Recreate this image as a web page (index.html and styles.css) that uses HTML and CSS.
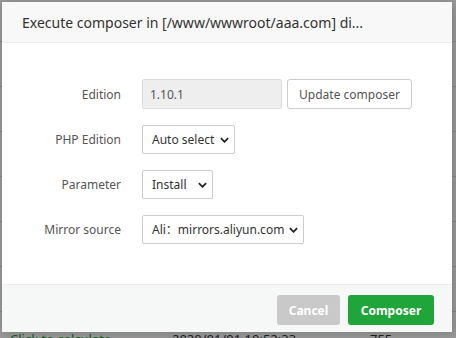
FILE: index.html
```html
<!DOCTYPE html>
<html>
<head>
<meta charset="utf-8">
<link rel="stylesheet" href="styles.css">
</head>
<body>
<div class="page">
  <div class="row"></div>
  <div class="row"></div>
  <div class="row"></div>
  <div class="row"></div>
  <div class="row"></div>
  <div class="row"></div>
  <div class="row"></div>
  <div class="row last"><span class="c1">Click to calculate</span><span class="c2">2020/01/01 10:52:33</span><span class="c3">755</span></div>
</div>
<div class="shade"></div>
<div class="dialog">
  <div class="dlg-title">Execute composer in [/www/wwwroot/aaa.com] di...</div>
  <div class="dlg-body">
    <div class="line">
      <label class="lbl">Edition</label>
      <div class="ctrls">
        <input class="inp" type="text" value="1.10.1" readonly>
        <button class="btn-update">Update composer</button>
      </div>
    </div>
    <div class="line">
      <label class="lbl">PHP Edition</label>
      <div class="ctrls"><div class="sel w-php">Auto select<svg class="chev" viewBox="0 0 10 6"><path d="M1 1l4 4 4-4"/></svg></div></div>
    </div>
    <div class="line">
      <label class="lbl">Parameter</label>
      <div class="ctrls"><div class="sel w-param">Install<svg class="chev" viewBox="0 0 10 6"><path d="M1 1l4 4 4-4"/></svg></div></div>
    </div>
    <div class="line">
      <label class="lbl">Mirror source</label>
      <div class="ctrls"><div class="sel w-mirror">Ali：mirrors.aliyun.com<svg class="chev" viewBox="0 0 10 6"><path d="M1 1l4 4 4-4"/></svg></div></div>
    </div>
  </div>
  <div class="dlg-foot">
    <button class="btn btn-cancel">Cancel</button>
    <button class="btn btn-ok">Composer</button>
  </div>
</div>
</body>
</html>
```

FILE: styles.css
```css
* { box-sizing: border-box; }
html, body { margin: 0; padding: 0; }
body {
  width: 456px;
  height: 338px;
  overflow: hidden;
  position: relative;
  background: #fff;
  font-family: "Noto Sans", "Noto Sans CJK SC", sans-serif;
}
.page { display: flex; flex-direction: column; }
.row {
  height: 45px;
  border-bottom: 1px solid #ddd;
  flex: none;
}
.row:first-child { height: 42px; }
.row.last {
  border-bottom: none;
  display: flex;
  align-items: center;
  font-size: 13px;
  color: #333;
  padding-left: 10px;
  padding-top: 8px;
}
.c1 { color: #20a53a; width: 162px; }
.c2 { width: 198px; }
.shade {
  position: absolute;
  inset: 0;
  background: rgba(0, 0, 0, 0.4);
}
.dialog {
  position: absolute;
  left: 2px;
  top: 2px;
  width: 450px;
  height: 330px;
  background: #fff;
  display: flex;
  flex-direction: column;
  box-shadow: 1px 1px 10px rgba(0,0,0,0.2);
}
.dlg-title {
  height: 41px;
  line-height: 41px;
  padding-left: 20px;
  font-size: 14px;
  color: #333;
  background: #f8f8f8;
  border-bottom: 1px solid #eee;
  white-space: nowrap;
  overflow: hidden;
}
.dlg-body {
  flex: 1;
  padding-top: 36px;
  display: flex;
  flex-direction: column;
  gap: 15px;
}
.line {
  display: flex;
  align-items: center;
  height: 30px;
}
.lbl {
  width: 119px;
  text-align: right;
  font-size: 12px;
  color: #555;
  margin-right: 21px;
}
.ctrls { display: flex; align-items: center; gap: 5px; }
.inp {
  width: 140px;
  height: 30px;
  border: 1px solid #ddd;
  border-radius: 2px;
  background: #eee;
  padding: 0 7px;
  font: 12px "Noto Sans", sans-serif;
  color: #555;
  outline: none;
}
.btn-update {
  height: 30px;
  width: 125px;
  border: 1px solid #ccc;
  border-radius: 3px;
  background: #fff;
  font: 12px "Noto Sans", sans-serif;
  color: #555;
  padding: 0;
}
.sel {
  height: 29px;
  border: 1px solid #ccc;
  border-radius: 2px;
  background: #fff;
  font-size: 12px;
  color: #333;
  display: flex;
  align-items: center;
  padding-left: 9px;
  position: relative;
  white-space: nowrap;
}
.w-php { width: 93px; }
.w-param { width: 71px; }
.w-mirror { width: 162px; }
.chev {
  position: absolute;
  right: 5px;
  top: 11px;
  width: 9px;
  height: 6px;
  fill: none;
  stroke: #222;
  stroke-width: 2;
}
.dlg-foot {
  height: 48px;
  background: #f6f8f8;
  border-top: 1px solid #eee;
  display: flex;
  justify-content: flex-end;
  align-items: flex-start;
  padding: 10px 18px 0 0;
  gap: 8px;
}
.btn {
  height: 30px;
  border: none;
  border-radius: 3px;
  color: #fff;
  font: bold 12px "Noto Sans", sans-serif;
  padding: 0;
}
.btn-cancel { width: 63px; background: #c9c9c9; }
.btn-ok { width: 86px; background: #20a53a; }
```
